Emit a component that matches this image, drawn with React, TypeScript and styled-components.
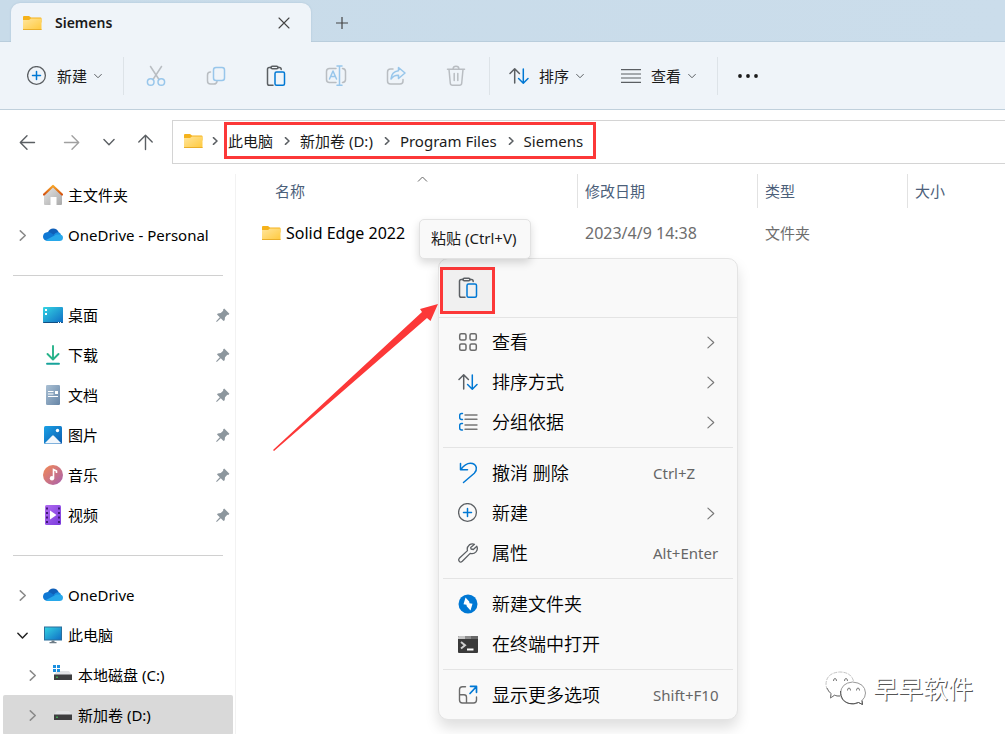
import React from "react";
import styled, { createGlobalStyle, css } from "styled-components";

const GlobalStyle = createGlobalStyle`
  *, *::before, *::after { box-sizing: border-box; }
  body {
    margin: 0;
    background: #ffffff;
    color: #1b1b1b;
    font-family: "Noto Sans", "Noto Sans CJK SC", sans-serif;
    font-size: 15px;
    line-height: 20px;
  }
  button { font: inherit; color: inherit; border: 0; background: none; padding: 0; cursor: pointer; }
  a { color: inherit; text-decoration: none; }
  ul, ol { list-style: none; margin: 0; padding: 0; }
  svg { display: block; flex: none; }
`;

const GREY = "#5b5f63";
const BLUE = "#0078d4";
const MARK = "#fc3838";

/* ---------- layout ---------- */

const Window = styled.div`
  position: relative;
  display: flex;
  flex-direction: column;
  min-height: 100vh;
  overflow: hidden;
`;

const TitleBar = styled.header`
  display: flex;
  align-items: flex-end;
  height: 42px;
  padding-left: 11px;
  background: linear-gradient(90deg, #c8dbe9, #cbddeb);
  box-shadow: inset 0 -1px 0 #b9cddc;
`;

const Tab = styled.div`
  display: flex;
  align-items: center;
  width: 300px;
  height: 39px;
  padding: 0 17px 0 12px;
  border-radius: 9px 9px 0 0;
  background: #eff4f9;
  box-shadow: 0 0 2px #a9c1d3;
  clip-path: inset(-3px -3px 0 -3px);
`;

const TabTitle = styled.span`
  flex: 1;
  margin-left: 13px;
  font-size: 14px;
  font-weight: 600;
`;

const TabButton = styled.button`
  display: grid;
  place-items: center;
  width: 20px;
  height: 20px;
`;

const NewTab = styled(TabButton)`
  margin: 0 0 9px 21px;
`;

const Toolbar = styled.div`
  display: flex;
  align-items: center;
  height: 68px;
  padding-left: 8px;
  background: #eff4f9;
  border-bottom: 1px solid #c0d0dc;
`;

const Separator = styled.span`
  width: 1px;
  height: 38px;
  background: #dde3e8;
`;

const Command = styled.button`
  display: flex;
  align-items: center;
  height: 40px;
  padding: 0 18px 0 19px;
  & > span { margin: 0 7px 0 10px; white-space: nowrap; }
`;

const Group = styled.div`
  display: flex;
  padding: 0 3px 0 0;
`;

const IconGroup = styled(Group)`
  padding: 0 3px 0 2px;
`;

const IconCommand = styled.button`
  display: grid;
  place-items: center;
  width: 60px;
  height: 40px;
  &:disabled { opacity: 0.36; }
`;

const AddressRow = styled.div`
  display: flex;
  align-items: center;
  height: 64px;
  padding-left: 5px;
`;

const NavButton = styled.button<{ $width: number }>`
  display: grid;
  place-items: center;
  flex: none;
  width: ${(p) => p.$width}px;
  height: 32px;
`;

const AddressBox = styled.nav`
  display: flex;
  flex: 1;
  align-items: center;
  height: 44px;
  margin-left: 7px;
  padding: 0 0 3px 11px;
  border: 1px solid #d4d4d4;
  border-right: 0;
`;

const CrumbLead = styled.span`
  margin: 0 5px 0 8px;
`;

const Crumbs = styled.ol`
  display: flex;
  align-items: center;
  height: 37px;
  padding: 1px 10px 0 1px;
  border: 3px solid ${MARK};
`;

const Crumb = styled.li`
  display: flex;
  align-items: center;
  white-space: nowrap;
  & > svg { margin: 0 9px 0 10px; }
`;

const Body = styled.div`
  display: flex;
  flex: 1;
`;

/* ---------- navigation pane ---------- */

const Sidebar = styled.nav`
  flex: none;
  width: 236px;
  padding: 1px 2px 0 3px;
  border-right: 1px solid #f2f2f2;
`;

const Row = styled.li<{ $level: number; $selected?: boolean }>`
  display: flex;
  align-items: center;
  height: 40px;
  padding: 0 3px 0 ${(p) => 9 + p.$level * 10}px;
  border-radius: 2px;
  ${(p) => p.$selected && css`background: #d9d9d9;`}
`;

const Twisty = styled.button`
  display: grid;
  place-items: center;
  width: 20px;
  height: 20px;
  margin-right: 11px;
`;

const TwistyGap = styled.span`
  width: 31px;
`;

const RowLink = styled.a`
  display: flex;
  flex: 1;
  align-items: center;
  gap: 5px;
  color: #000;
  white-space: nowrap;
`;

const Rule = styled.li`
  display: flex;
  align-items: center;
  height: 40px;
  padding: 0 10px;
  &::before { content: ""; flex: 1; height: 1px; background: #d0d0d0; }
`;

/* ---------- file list ---------- */

const Main = styled.main`
  flex: 1;
  min-width: 0;
`;

const Table = styled.table`
  width: 100%;
  border-collapse: separate;
  border-spacing: 0;
  table-layout: fixed;
`;

const Th = styled.th<{ $width?: number; $indent?: number }>`
  position: relative;
  width: ${(p) => (p.$width ? `${p.$width}px` : "auto")};
  height: 34px;
  padding: 0 0 0 ${(p) => p.$indent ?? 7}px;
  border-right: ${(p) => (p.$width ? "1px solid #e2e2e2" : "0")};
  color: #4c607a;
  font-weight: 400;
  text-align: left;
`;

const SortCaret = styled.svg`
  position: absolute;
  top: 2px;
  left: 181px;
`;

const Td = styled.td`
  height: 50px;
  padding: 0 0 0 7px;
  color: #6d6d6d;
  white-space: nowrap;
`;

const DateCell = styled(Td)`
  font-size: 16px;
`;

const NameCell = styled(Td)`
  padding-left: 26px;
  color: #000;
  font-size: 16px;
`;

const FileLink = styled.a`
  display: flex;
  align-items: center;
  gap: 5px;
`;

/* ---------- overlays ---------- */

const Menu = styled.div`
  position: absolute;
  top: 258px;
  left: 438px;
  width: 300px;
  border: 1px solid #e4e4e4;
  border-radius: 10px;
  background: #f9f9f9;
  box-shadow: 0 8px 14px rgba(0, 0, 0, 0.13);
`;

const MenuTop = styled.div`
  height: 59px;
  padding: 8px 0 0 1px;
  border-bottom: 1px solid #e4e4e4;
`;

const PasteButton = styled.button`
  display: grid;
  place-items: center;
  width: 55px;
  height: 47px;
  padding-bottom: 5px;
  border: 3px solid ${MARK};
  background: #f0f0f0;
`;

const MenuList = styled.ul`
  padding: 4px 0;
`;

const MenuItem = styled.button`
  display: flex;
  align-items: center;
  width: 100%;
  height: 40px;
  padding: 0 20px 0 19px;
  text-align: left;
`;

const MenuLabel = styled.span`
  flex: 1;
  margin-left: 14px;
  font-size: 18px;
  font-weight: 350;
  line-height: 24px;
  color: #000;
`;

const Shortcut = styled.kbd`
  width: 64px;
  font-family: inherit;
  font-size: 15px;
  color: #666;
  white-space: nowrap;
`;

const MenuRule = styled.li`
  height: 1px;
  margin: 5px 4px;
  background: #e4e4e4;
`;

const Tooltip = styled.div`
  position: absolute;
  top: 219px;
  left: 419px;
  padding: 8px 14px 10px 11px;
  border: 1px solid #e2e2e2;
  border-radius: 5px;
  background: #f9f9f9;
  box-shadow: 0 4px 8px rgba(0, 0, 0, 0.15);
  white-space: nowrap;
`;

const Pointer = styled.svg`
  position: absolute;
  top: 300px;
  left: 270px;
`;

const Watermark = styled.div`
  position: absolute;
  right: 32px;
  bottom: 29px;
  display: flex;
  align-items: center;
  gap: 6px;
  color: #fff;
  font-size: 25px;
  line-height: 36px;
  text-shadow: 1px 1px 0 #555;
`;

/* ---------- icons ---------- */

const stroke = { fill: "none", strokeLinecap: "round", strokeLinejoin: "round" } as const;

const Folder = () => (
  <svg width="19" height="16" viewBox="0 0 19 16">
    <defs>
      <linearGradient id="folder" x1="0" y1="0" x2="1" y2="1">
        <stop offset="0" stopColor="#ffe59c" />
        <stop offset="1" stopColor="#ffc93c" />
      </linearGradient>
    </defs>
    <path d="M0 2q0-1 1-1h5l2 1.500h9.500q1 0 1 1v4H0z" fill="#f5b21b" />
    <path d="M0 5h6l2-1.500h10.500v11q0 .5-.5.5H.5q-.5 0-.5-.5z" fill="url(#folder)" />
    <path d="M0 14.500h18.500" stroke="#e9ae2a" />
  </svg>
);

const Chevron = ({ dir, size = 10, color = GREY, w = 1.2 }: { dir: "right" | "down" | "up"; size?: number; color?: string; w?: number }) => {
  const d = { right: "M3 .8 7.500 5 3 9.200", down: "M.8 3 5 7.200 9.200 3", up: "M.8 7 5 2.800 9.200 7" }[dir];
  return (
    <svg width={size} height={size} viewBox="0 0 10 10" {...stroke} stroke={color} strokeWidth={(w * 10) / size}>
      <path d={d} />
    </svg>
  );
};

const PlusCircle = () => (
  <svg width="20" height="20" viewBox="0 0 20 20" {...stroke} strokeWidth="1.3">
    <circle cx="9.500" cy="9.500" r="8.900" stroke={GREY} />
    <path d="M9.500 5.500v8M5.500 9.500h8" stroke={BLUE} strokeWidth="1.500" />
  </svg>
);

const Cut = () => (
  <svg width="20" height="22" viewBox="0 0 20 22" {...stroke} strokeWidth="1.500">
    <path d="M4.500 1.500 13 14.500M15.500 1.500 7 14.500" stroke={GREY} />
    <circle cx="4.700" cy="17" r="3.300" stroke={BLUE} />
    <circle cx="15.300" cy="17" r="3.300" stroke={BLUE} />
  </svg>
);

const Copy = () => (
  <svg width="20" height="20" viewBox="0 0 20 20" {...stroke} strokeWidth="1.500">
    <path d="M4.500 6Q1.500 6 1.500 9v6q0 3 3 3H8q2.500 0 3-2.500" stroke={GREY} />
    <rect x="7.500" y="1.500" width="11" height="13" rx="2.500" stroke={BLUE} />
  </svg>
);

const Paste = () => (
  <svg width="20" height="22" viewBox="0 0 20 22" {...stroke} strokeWidth="1.500">
    <path d="M7 20.300H3.200q-1.700 0-1.700-1.700V4.200q0-1.700 1.700-1.700H5M12 2.500h1.500q1.700 0 1.700 2" stroke={GREY} />
    <rect x="5" y="1.200" width="7" height="2.600" rx="1.300" stroke={GREY} />
    <rect x="9" y="7" width="9.500" height="13.300" rx="1.500" stroke={BLUE} />
  </svg>
);

const Rename = () => (
  <svg width="22" height="22" viewBox="0 0 22 22" {...stroke} strokeWidth="1.500">
    <path d="M11 3.500H4.500q-3 0-3 3v8q0 3 3 3H11M17.500 3.500q3 .2 3 3v8q0 2.800-3 3" stroke={GREY} />
    <path d="M4.500 14 8 6l3.500 8M5.700 11.500h4.600M14.500 1.500v18.500M12 1h5M12 20.300h5" stroke={BLUE} />
  </svg>
);

const Share = () => (
  <svg width="20" height="20" viewBox="0 0 20 20" {...stroke} strokeWidth="1.500">
    <path d="M7 3H4.500Q1.500 3 1.500 6v9q0 3 3 3H14q3 0 3-3v-1.500" stroke={GREY} />
    <path d="M12.500 1.500 19 7l-6.500 5.500V9.300Q8 9 5 13q.5-7.500 7.500-8.300z" stroke={BLUE} />
  </svg>
);

const Trash = () => (
  <svg width="20" height="22" viewBox="0 0 20 22" {...stroke} strokeWidth="1.500" stroke={GREY}>
    <path d="M1.500 4.300h17M7 4Q7.200 1.300 10 1.300T13 4M3 4.500l1.300 13.800q.2 2 2.200 2h7q2 0 2.200-2L17 4.500M8.200 8.500v7M11.800 8.500v7" />
  </svg>
);

const Sort = () => (
  <svg width="20" height="18" viewBox="0 0 20 18" {...stroke} strokeWidth="1.500">
    <path d="M5.700 16V2M1 6.500 5.700 1.800 10.400 6.500" stroke={GREY} />
    <path d="M14.300 2v14M9.600 11.500l4.700 4.700 4.700-4.700" stroke={BLUE} />
  </svg>
);

const Lines = () => (
  <svg width="20" height="14" viewBox="0 0 20 14" stroke={GREY} strokeWidth="1.200">
    <path d="M0 .6h20M0 5h20M0 9h20M0 13.400h20" />
  </svg>
);

const Dots = () => (
  <svg width="20" height="4" viewBox="0 0 20 4" fill="#1b1b1b">
    <circle cx="2" cy="2" r="1.900" /><circle cx="10" cy="2" r="1.900" /><circle cx="18" cy="2" r="1.900" />
  </svg>
);

const Arrow = ({ turn = 0, color = GREY }: { turn?: number; color?: string }) => (
  <svg width="17" height="17" viewBox="0 0 17 17" {...stroke} stroke={color} strokeWidth="1.400">
    <path d="M15.500 8.500H1.500M8 1.800 1.300 8.500 8 15.200" transform={`rotate(${turn} 8.500 8.500)`} />
  </svg>
);

const Cross = () => (
  <svg width="12" height="12" viewBox="0 0 12 12" {...stroke} stroke="#444" strokeWidth="1.100"><path d="M1 1l10 10M11 1 1 11" /></svg>
);

const Plus = () => (
  <svg width="12" height="12" viewBox="0 0 12 12" stroke="#444" strokeWidth="1.200"><path d="M6 0v12M0 6h12" /></svg>
);

const Pin = () => (
  <svg width="14" height="14" viewBox="0 0 14 14" fill="#8d979e">
    <path d="M8.200.6 13.400 5.800 12.300 7l-1-.2L9 9.200l-.3 3L7.500 13 4.800 10.200.8 13.900.1 13.200 3.800 9.200 1 6.500l.8-1.100 3-.4L7.200 2.700 7 1.700z" />
  </svg>
);

const Home = () => (
  <svg width="20" height="22" viewBox="0 0 20 22">
    <defs>
      <linearGradient id="wall" x1="0" y1="0" x2="1" y2="1"><stop offset="0" stopColor="#e6e6e6" /><stop offset="1" stopColor="#a9a9a9" /></linearGradient>
      <linearGradient id="roof" x1="0" y1="0" x2="0" y2="1"><stop offset="0" stopColor="#f7a325" /><stop offset="1" stopColor="#d5520f" /></linearGradient>
    </defs>
    <path d="M1 10 10 2.500 19 10v10q0 1-1 1h-4.500v-8h-6v8H2q-1 0-1-1z" fill="url(#wall)" />
    <path d="M1 10.500 10 2l9 8.500" fill="none" stroke="url(#roof)" strokeWidth="2.200" strokeLinecap="round" strokeLinejoin="round" />
  </svg>
);

const Cloud = () => (
  <svg width="20" height="14" viewBox="0 0 20 14">
    <path d="M4.800 4.500Q6.500.5 10.200.5q4 0 5.600 4L11 9z" fill="#0f5fb8" />
    <path d="M3 12.500Q0 11.500 0 8.500 .2 4.800 4 4.200q2-.4 4 .8l5 3.300L6 13z" fill="#0f78d4" />
    <path d="M10.500 7Q12.500 4 15.500 4.300q1.800.2 2.500 2.200l-3 3z" fill="#1b8ee0" />
    <path d="M2.500 12.300 11.500 7.500Q13 6.200 15.500 6.500 20 6.300 20 9.800q-.2 3.200-3.500 3.200H5q-1.500 0-2.500-.7z" fill="#28a8ea" />
  </svg>
);

const Desktop = () => (
  <svg width="20" height="16" viewBox="0 0 20 16">
    <defs><linearGradient id="screen" x1="0" y1="0" x2="1" y2="1"><stop offset="0" stopColor="#35d5e3" /><stop offset="1" stopColor="#0f6cc4" /></linearGradient></defs>
    <rect width="20" height="16" rx="1" fill="url(#screen)" />
    <path d="M0 15h20q0 1-1 1H1q-1 0-1-1z" fill="#114f83" />
    <path d="M2 2h2v2H2zM2 6h2v2H2zM15 15h1v1h-1zM17 15h1v1h-1z" fill="#fff" />
  </svg>
);

const Download = () => (
  <svg width="20" height="20" viewBox="0 0 20 20" {...stroke} strokeWidth="1.900">
    <path d="M10 1v13M4.500 9l5.500 5.500L15.500 9" stroke="#27b38a" />
    <path d="M4 18.800h12" stroke="#17a39b" />
  </svg>
);

const Document = () => (
  <svg width="20" height="20" viewBox="0 0 20 20">
    <defs><linearGradient id="doc" x1="0" y1="0" x2="1" y2="1"><stop offset="0" stopColor="#aac0d4" /><stop offset="1" stopColor="#6685a6" /></linearGradient></defs>
    <rect x="3" width="14" height="20" rx="1.200" fill="url(#doc)" />
    <path d="M5 6.500h5.500M5 9h5.500M5 11.500h10" stroke="#fff" strokeWidth="1.200" />
    <rect x="12" y="6" width="3" height="3" fill="#fff" />
  </svg>
);

const Pictures = () => (
  <svg width="20" height="18" viewBox="0 0 20 18">
    <defs><linearGradient id="pic" x1="0" y1="0" x2="1" y2="1"><stop offset="0" stopColor="#1ba1e6" /><stop offset="1" stopColor="#0b5cb0" /></linearGradient></defs>
    <rect x="1" width="18" height="18" rx="1.500" fill="url(#pic)" />
    <path d="M2 17 9.200 9.700q.8-.7 1.600 0L18 17q-.5.500-1 .5H3q-.5 0-1-.5z" fill="#f1f6fb" />
    <circle cx="14.500" cy="4.500" r="1.700" fill="#fff" />
  </svg>
);

const Music = () => (
  <svg width="20" height="20" viewBox="0 0 20 20">
    <defs><linearGradient id="music" x1="0" y1="0" x2="1" y2="1"><stop offset="0" stopColor="#f58a52" /><stop offset="1" stopColor="#a760b0" /></linearGradient></defs>
    <circle cx="10" cy="10" r="10" fill="url(#music)" />
    <circle cx="9" cy="13.200" r="2.200" fill="#fff" />
    <path d="M10.500 13V4.500L13.500 6v2" fill="none" stroke="#fff" strokeWidth="1.600" />
  </svg>
);

const Video = () => (
  <svg width="20" height="20" viewBox="0 0 20 20">
    <defs><linearGradient id="video" x1="0" y1="0" x2="1" y2="1"><stop offset="0" stopColor="#b06af0" /><stop offset="1" stopColor="#7a3bdc" /></linearGradient></defs>
    <rect x="2" width="16" height="20" rx="1.500" fill="url(#video)" />
    <path d="M4 2.500v16M16 2.500v16" stroke="#3f1a77" strokeWidth="2" strokeDasharray="2 2.500" />
    <path d="M7 5.500v9l6.500-4.500z" fill="#fff" />
  </svg>
);

const Monitor = () => (
  <svg width="20" height="18" viewBox="0 0 20 18">
    <rect x="1.500" y="1" width="17" height="13" fill="url(#screen)" stroke="#2a6f9c" />
    <path d="M8.500 14.500h3V16h2v1.300h-7V16h2z" fill="#6e7c86" />
  </svg>
);

const Drive = ({ system }: { system?: boolean }) => (
  <svg width="20" height="20" viewBox="0 0 20 20">
    <path d="M4 6h12l3 4H1z" fill="#e2e3e6" />
    <rect x="1" y="9.500" width="18" height="5.500" fill="#3e3e40" />
    <path d="M3 12.200h2" stroke="#44d15a" />
    {system && <path d="M0 0h3v3H0zM4 0h3v3H4zM0 4h3v3H0zM4 4h3v3H4z" fill="#1b8fe0" />}
  </svg>
);

const Grid = () => (
  <svg width="20" height="20" viewBox="0 0 20 20" {...stroke} stroke="#6b6b6b" strokeWidth="1.500">
    <rect x="1.700" y="1.700" width="6.300" height="6.300" rx="1.500" /><rect x="12" y="1.700" width="6.300" height="6.300" rx="1.500" />
    <rect x="1.700" y="12" width="6.300" height="6.300" rx="1.500" /><rect x="12" y="12" width="6.300" height="6.300" rx="1.500" />
  </svg>
);

const GroupBy = () => (
  <svg width="20" height="20" viewBox="0 0 20 20" {...stroke} strokeWidth="1.400">
    <path d="M4.500 1.500h-.8Q1.700 1.500 1.700 3.500v2q0 2 2 2h.8M4.500 11.500h-.8q-2 0-2 2v2.500q0 2 2 2h.8" stroke={BLUE} />
    <path d="M7 3h12M7 7.300h12M7 13h12M7 17.300h12" stroke="#777" />
  </svg>
);

const Undo = () => (
  <svg width="20" height="22" viewBox="0 0 20 22" {...stroke} stroke={BLUE} strokeWidth="1.500">
    <path d="M2.500 1.500v6.300h7M2.800 7.500Q7.500 1.300 12.300 1.300q5 0 6 4.200.6 3-2 5.700L5.500 20.500" />
  </svg>
);

const Wrench = () => (
  <svg width="20" height="20" viewBox="0 0 20 20" {...stroke} stroke={GREY} strokeWidth="1.300">
    <path d="M16.500 1.300Q13.800.2 11.300 1.900 8.500 4.200 9.500 7.600L1.300 15.300q-1.200 1.500 0 3t3 0L12.200 10.400q3.500 1 5.800-1.500 2.200-2.700.8-5.700L15.300 6.500 13 6 12.700 4.400z" />
  </svg>
);

const Bolt = () => (
  <svg width="20" height="20" viewBox="0 0 20 20">
    <circle cx="10" cy="10" r="9.500" fill={BLUE} />
    <path d="M7.500 3.500 11.200 7.500 11.500 9.200 14.500 9.800 12.500 16.500 8.700 12.300 8.500 10.800 5.500 10.200z" fill="#fff" />
  </svg>
);

const Terminal = () => (
  <svg width="20" height="17" viewBox="0 0 20 17">
    <rect width="20" height="17" rx="1" fill="#3a3a3a" />
    <path d="M0 1q0-1 1-1h6v3H0z" fill="#c5c5c5" /><path d="M7 0h6v3H7z" fill="#8d8d8d" /><path d="M13 0h6q1 0 1 1v2h-7z" fill="#686868" />
    <path d="M3 6l4 3.200L3 12.500" fill="none" stroke="#d0d0d0" strokeWidth="2" /><path d="M9 13.500h6.500" stroke="#fff" strokeWidth="2" />
  </svg>
);

const More = () => (
  <svg width="20" height="20" viewBox="0 0 20 20" {...stroke} strokeWidth="1.400">
    <path d="M7.500 1.700H4.500q-3 0-3 3V15q0 3 3 3h11q3 0 3-3v-3M1.500 9.700h4.500q2.500 0 2.500 2.500V18" stroke="#6b6b6b" />
    <path d="M12 8.500 18.500 1.500M12.500 1.300h6v6" stroke={BLUE} strokeWidth="1.700" />
  </svg>
);

const Bubbles = () => (
  <svg width="42" height="36" viewBox="0 0 42 36" fill="#fff" strokeWidth="1">
    <path d="M15 26q-3 .3-5.500-.8L5.500 28l.5-4.500Q1 20 1 14 1.500 3 14.500 2 26 2 28.500 11" stroke="#c4c4c4" strokeDasharray="4 1" />
    <path d="M2 18q1.500 3.500 4 5.500L5.500 28l4-2.800Q12 26.300 15 26" fill="none" stroke="#777" />
    <path d="M27.500 12Q40 13 40.500 23q0 4.500-3.500 7.500l.5 4-4-2Q30.500 34 27 34 16 33 15.500 23.500 16 13 27.500 12z" stroke="#999" />
    <path d="M15.500 21Q15.500 31 24 33.500 29 34.500 33.500 32.500l4 2-.5-4" fill="none" stroke="#555" />
    <path d="M8.500 11q0-2.500 1.500-2.500T11.500 11M19.500 11q0-2.500 1.500-2.500T22.500 11M22.500 20.500q0-2.500 1.500-2.500t1.500 2.500M31.500 20.500q0-2.500 1.500-2.500t1.500 2.500" fill="none" stroke="#777" />
  </svg>
);

/* ---------- data ---------- */

type Place = { name: string; icon: React.ReactNode; level?: number; twisty?: "right" | "down"; pinned?: boolean; selected?: boolean };

const places: Place[][] = [
  [
    { name: "主文件夹", icon: <Home /> },
    { name: "OneDrive - Personal", icon: <Cloud />, twisty: "right" },
  ],
  [
    { name: "桌面", icon: <Desktop />, pinned: true },
    { name: "下载", icon: <Download />, pinned: true },
    { name: "文档", icon: <Document />, pinned: true },
    { name: "图片", icon: <Pictures />, pinned: true },
    { name: "音乐", icon: <Music />, pinned: true },
    { name: "视频", icon: <Video />, pinned: true },
  ],
  [
    { name: "OneDrive", icon: <Cloud />, twisty: "right" },
    { name: "此电脑", icon: <Monitor />, twisty: "down" },
    { name: "本地磁盘 (C:)", icon: <Drive system />, level: 1, twisty: "right" },
    { name: "新加卷 (D:)", icon: <Drive />, level: 1, twisty: "right", selected: true },
  ],
];

type Action = { name: string; icon: React.ReactNode; keys?: string; sub?: boolean };

const actions: Action[][] = [
  [
    { name: "查看", icon: <Grid />, sub: true },
    { name: "排序方式", icon: <Sort />, sub: true },
    { name: "分组依据", icon: <GroupBy />, sub: true },
  ],
  [
    { name: "撤消 删除", icon: <Undo />, keys: "Ctrl+Z" },
    { name: "新建", icon: <PlusCircle />, sub: true },
    { name: "属性", icon: <Wrench />, keys: "Alt+Enter" },
  ],
  [
    { name: "新建文件夹", icon: <Bolt /> },
    { name: "在终端中打开", icon: <Terminal /> },
  ],
  [{ name: "显示更多选项", icon: <More />, keys: "Shift+F10" }],
];

const crumbs = ["此电脑", "新加卷 (D:)", "Program Files", "Siemens"];

export default function App() {
  return (
    <Window>
      <GlobalStyle />
      <TitleBar>
        <Tab>
          <Folder />
          <TabTitle>Siemens</TabTitle>
          <TabButton aria-label="关闭标签页"><Cross /></TabButton>
        </Tab>
        <NewTab aria-label="新建标签页"><Plus /></NewTab>
      </TitleBar>

      <Toolbar role="toolbar">
        <Group>
          <Command><PlusCircle /><span>新建</span><Chevron dir="down" size={8} w={1} /></Command>
        </Group>
        <Separator />
        <IconGroup>
          <IconCommand disabled aria-label="剪切"><Cut /></IconCommand>
          <IconCommand disabled aria-label="复制"><Copy /></IconCommand>
          <IconCommand aria-label="粘贴"><Paste /></IconCommand>
          <IconCommand disabled aria-label="重命名"><Rename /></IconCommand>
          <IconCommand disabled aria-label="共享"><Share /></IconCommand>
          <IconCommand disabled aria-label="删除"><Trash /></IconCommand>
        </IconGroup>
        <Separator />
        <Group>
          <Command><Sort /><span>排序</span><Chevron dir="down" size={8} w={1} /></Command>
          <Command><Lines /><span>查看</span><Chevron dir="down" size={8} w={1} /></Command>
        </Group>
        <Separator />
        <IconCommand aria-label="更多"><Dots /></IconCommand>
      </Toolbar>

      <AddressRow>
        <NavButton $width={44} aria-label="后退"><Arrow /></NavButton>
        <NavButton $width={44} aria-label="前进"><Arrow turn={180} color="#a0a0a0" /></NavButton>
        <NavButton $width={32} aria-label="最近位置"><Chevron dir="down" size={12} w={1.4} /></NavButton>
        <NavButton $width={40} aria-label="向上"><Arrow turn={90} /></NavButton>
        <AddressBox aria-label="地址">
          <Folder />
          <CrumbLead><Chevron dir="right" size={8} w={1.5} /></CrumbLead>
          <Crumbs>
            {crumbs.map((name, i) => (
              <Crumb key={name}>
                <a href="#">{name}</a>
                {i < crumbs.length - 1 && <Chevron dir="right" size={8} w={1.5} />}
              </Crumb>
            ))}
          </Crumbs>
        </AddressBox>
      </AddressRow>

      <Body>
        <Sidebar aria-label="导航窗格">
          <ul>
            {places.map((group, g) => (
              <React.Fragment key={g}>
                {g > 0 && <Rule role="separator" />}
                {group.map((p) => (
                  <Row key={p.name} $level={p.level ?? 0} $selected={p.selected}>
                    {p.twisty ? (
                      <Twisty aria-label="展开">
                        <Chevron dir={p.twisty} size={11} w={1.5} color={p.twisty === "down" ? "#222" : "#8a8a8a"} />
                      </Twisty>
                    ) : (
                      <TwistyGap />
                    )}
                    <RowLink href="#">{p.icon}<span>{p.name}</span></RowLink>
                    {p.pinned && <Pin />}
                  </Row>
                ))}
              </React.Fragment>
            ))}
          </ul>
        </Sidebar>

        <Main>
          <Table>
            <thead>
              <tr>
                <Th $width={342} $indent={39}>
                  名称
                  <SortCaret width="11" height="6" viewBox="0 0 11 6" fill="none" stroke="#666">
                    <path d="M1 5.500 5.500 1 10 5.500" />
                  </SortCaret>
                </Th>
                <Th $width={180}>修改日期</Th>
                <Th $width={150}>类型</Th>
                <Th>大小</Th>
              </tr>
            </thead>
            <tbody>
              <tr>
                <NameCell><FileLink href="#"><Folder />Solid Edge 2022</FileLink></NameCell>
                <DateCell>2023/4/9 14:38</DateCell>
                <Td>文件夹</Td>
                <Td />
              </tr>
            </tbody>
          </Table>
        </Main>
      </Body>

      <Menu role="menu">
        <MenuTop>
          <PasteButton aria-label="粘贴"><Paste /></PasteButton>
        </MenuTop>
        <MenuList>
          {actions.map((group, g) => (
            <React.Fragment key={g}>
              {g > 0 && <MenuRule role="separator" />}
              {group.map((a) => (
                <li key={a.name}>
                  <MenuItem role="menuitem">
                    {a.icon}
                    <MenuLabel>{a.name}</MenuLabel>
                    {a.keys && <Shortcut>{a.keys}</Shortcut>}
                    {a.sub && <Chevron dir="right" size={13} w={1.1} color="#777" />}
                  </MenuItem>
                </li>
              ))}
            </React.Fragment>
          ))}
        </MenuList>
      </Menu>

      <Tooltip role="tooltip">粘贴 (Ctrl+V)</Tooltip>

      <Pointer width="170" height="154" viewBox="0 0 170 154" fill={MARK} aria-hidden="true">
        <path d="M3 150 152 12 150 9 168 4 160.500 21 157 18 4 151z" />
      </Pointer>

      <Watermark><Bubbles /><span>早早软件</span></Watermark>
    </Window>
  );
}
